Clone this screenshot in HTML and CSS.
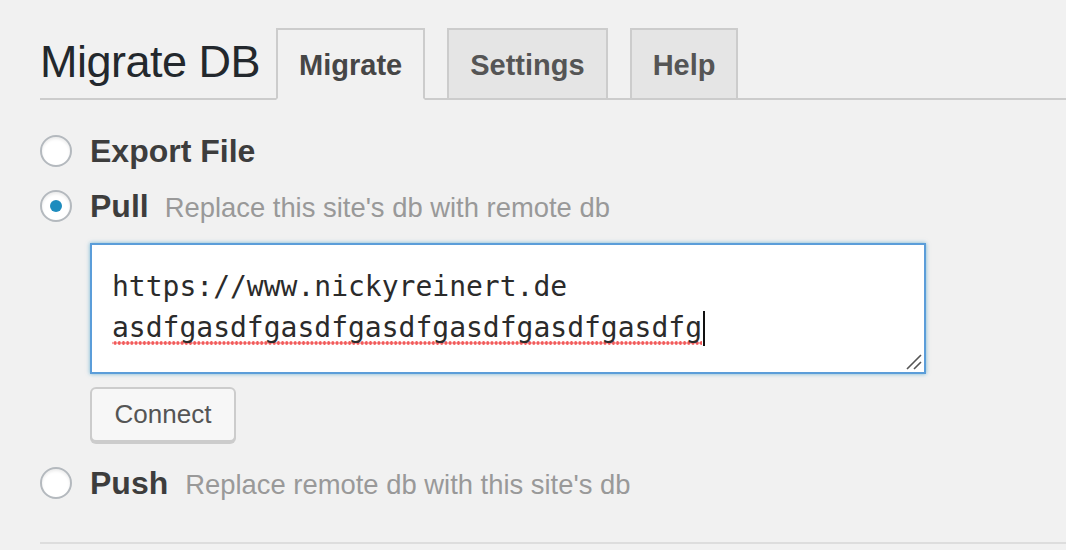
FILE: index.html
```html
<!DOCTYPE html>
<html lang="en">
<head>
<meta charset="utf-8">
<title>Migrate DB</title>
<link rel="stylesheet" href="styles.css">
</head>
<body>
<div class="wrap">
  <div class="nav">
    <h1 class="title">Migrate DB</h1>
    <a class="tab active">Migrate</a>
    <a class="tab">Settings</a>
    <a class="tab">Help</a>
  </div>

  <div class="options">
    <div class="row row-export">
      <span class="radio"></span>
      <span class="label">Export File</span>
    </div>
    <div class="row row-pull">
      <span class="radio checked"></span>
      <span class="label">Pull</span>
      <span class="desc">Replace this site's db with remote db</span>
    </div>
    <div class="pull-body">
      <div class="textarea">
        <div class="line">https://www.nickyreinert.de</div>
        <div class="line"><span class="misspelled">asdfgasdfgasdfgasdfgasdfgasdfgasdfg</span><span class="caret"></span></div>
        <svg class="grip" width="16" height="16" viewBox="0 0 16 16"><path d="M1 15 L15 1 M8 15 L15 8" stroke="#555" stroke-width="1.6" fill="none"/></svg>
      </div>
      <button class="button">Connect</button>
    </div>
    <div class="row row-push">
      <span class="radio"></span>
      <span class="label">Push</span>
      <span class="desc desc-push">Replace remote db with this site's db</span>
    </div>
  </div>
  <div class="divider"></div>
</div>
</body>
</html>
```
FILE: styles.css
```css
html, body {
  margin: 0;
  padding: 0;
  background: #f1f1f1;
}
body {
  font-family: "Liberation Sans", Arial, sans-serif;
  color: #444;
  overflow: hidden;
}
.wrap {
  padding-left: 40px;
  padding-top: 28px;
}
.nav {
  display: flex;
  align-items: flex-end;
  border-bottom: 2px solid #ccc;
  height: 70px;
}
.title {
  margin: 0 16px 0 0;
  font-weight: 400;
  font-size: 45px;
  letter-spacing: -0.5px;
  color: #23282d;
  line-height: 1;
  align-self: flex-end;
  padding-bottom: 14px;
}
.tab {
  box-sizing: border-box;
  height: 72px;
  margin-bottom: -2px;
  margin-right: 22px;
  padding: 0 21px;
  border: 2px solid #ccc;
  background: #e5e5e5;
  color: #555;
  font-weight: 700;
  font-size: 29px;
  display: flex;
  align-items: center;
  padding-top: 2px;
}
.tab.active {
  background: #f1f1f1;
  border-bottom-color: #f1f1f1;
  color: #464646;
}
.options {
  padding-top: 31px;
}
.row {
  display: flex;
  align-items: center;
  height: 40px;
}
.row-pull {
  margin-top: 15px;
}
.row-push {
  margin-top: 21px;
}
.radio {
  box-sizing: border-box;
  width: 32px;
  height: 32px;
  border-radius: 50%;
  border: 2px solid #b4b9be;
  background: #fff;
  box-shadow: inset 0 2px 3px rgba(0, 0, 0, 0.08);
  display: flex;
  align-items: center;
  justify-content: center;
  margin-right: 18px;
  flex: none;
}
.radio.checked::after {
  content: "";
  width: 12px;
  height: 12px;
  border-radius: 50%;
  background: #1e8cbe;
}
.label {
  font-weight: 700;
  font-size: 32px;
  color: #3d3d3d;
}
.desc {
  margin-left: 16px;
  font-size: 27.4px;
  color: #999;
  padding-top: 4px;
}
.desc-push {
  margin-left: 17px;
}
.pull-body {
  padding-left: 50px;
  padding-top: 17px;
}
.textarea {
  position: relative;
  box-sizing: border-box;
  width: 836px;
  height: 131px;
  background: #fff;
  border: 2px solid #5b9dd9;
  box-shadow: 0 0 4px rgba(30, 140, 190, 0.6);
  padding: 21px 20px 0;
  font-family: "DejaVu Sans Mono", Menlo, monospace;
  font-size: 28px;
  line-height: 41px;
  color: #2b2b2b;
}
.line {
  white-space: nowrap;
}
.misspelled {
  background-image: radial-gradient(circle, #f25b5b 1.5px, rgba(242, 91, 91, 0) 2px);
  background-size: 4.2px 4px;
  background-repeat: repeat-x;
  background-position: 1px 100%;
  padding-bottom: 1px;
}
.caret {
  display: inline-block;
  width: 2px;
  height: 35px;
  background: #111;
  vertical-align: -9px;
  margin-left: 1px;
}
.grip {
  position: absolute;
  right: 2px;
  bottom: 2px;
}
.button {
  display: block;
  box-sizing: border-box;
  margin-top: 13px;
  width: 146px;
  height: 55px;
  border: 2px solid #ccc;
  border-radius: 6px;
  background: #f7f7f7;
  box-shadow: 0 2px 0 #ccc;
  font-family: "Liberation Sans", Arial, sans-serif;
  font-size: 26px;
  color: #555;
  padding: 0;
}
.divider {
  margin-top: 39px;
  height: 2px;
  background: #ddd;
}
```
